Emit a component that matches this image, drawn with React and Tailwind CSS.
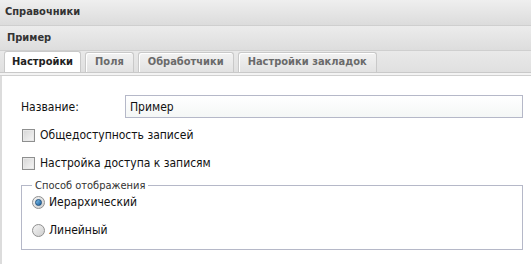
import React from 'react';

const font = { fontFamily: '"DejaVu Sans Condensed", "DejaVu Sans", sans-serif' };

function Tab({ label, active }) {
  if (active) {
    return (
      <div className="h-[21px] px-[7px] flex items-center rounded-t-[3px] border border-b-0 border-[#c9c9c9] bg-white text-[11px] font-bold text-[#222]">
        {label}
      </div>
    );
  }
  return (
    <div className="h-[20px] px-[9px] flex items-center rounded-t-[3px] border border-b-0 border-[#c9c9c9] bg-gradient-to-b from-[#f2f2f2] to-[#e2e2e2] shadow-[inset_1px_1px_0_#fff] text-[11px] font-bold text-[#6a6a6a]">
      {label}
    </div>
  );
}

function Checkbox({ label }) {
  return (
    <label className="flex items-center gap-[5px] h-[14px]">
      <span className="w-[13px] h-[13px] border border-[#8e8f8f] bg-gradient-to-br from-[#d6d6d6] to-[#f6f6f6] shadow-[inset_0_0_0_1px_#e8e8e8]" />
      <span>{label}</span>
    </label>
  );
}

function Radio({ label, checked }) {
  return (
    <label className="flex items-center gap-[4px] h-[14px]">
      <span className="w-[13px] h-[13px] rounded-full border border-[#8f8f8f] bg-gradient-to-br from-[#f4f4f4] to-[#cfcfcf] flex items-center justify-center">
        {checked && <span className="w-[7px] h-[7px] rounded-full bg-gradient-to-br from-[#7ec3ef] to-[#1b5f9c] border border-[#1d4f7d]" />}
      </span>
      <span>{label}</span>
    </label>
  );
}

export default function App() {
  return (
    <div className="w-[531px] h-[264px] bg-white overflow-hidden" style={font}>
      <div className="h-[26px] px-[5px] flex items-center border-b border-[#cfcfcf] bg-gradient-to-b from-[#efefef] to-[#dcdcdc] text-[11px] font-bold text-[#333]">
        Справочники
      </div>
      <div className="h-[25px] px-[7px] flex items-center border-b border-[#cfcfcf] bg-gradient-to-b from-[#ececec] to-[#dddddd] text-[11px] font-bold text-[#333]">
        Пример
      </div>
      <div className="h-[22px] pl-[4px] flex items-end gap-[4px] bg-gradient-to-b from-[#e9e9e9] to-[#e0e0e0] border-b border-[#c9c9c9]">
        <Tab label="Настройки" active />
        <Tab label="Поля" />
        <Tab label="Обработчики" />
        <Tab label="Настройки закладок" />
      </div>
      <div className="h-[3px] bg-[#f3f3f3] border-b border-[#d0d0d0]" />
      <div className="border-l-2 border-[#dcdcdc] h-full pl-[19px] pr-[8px] pt-[19px] text-[12px] text-[#111]">
        <div className="flex items-center h-[23px]">
          <span className="w-[104px]">Название:</span>
          <div className="flex-1 h-[23px] px-[4px] flex items-center border border-[#b5b8c8] bg-gradient-to-b from-[#ffffff] to-[#f4f7f6]">
            Пример
          </div>
        </div>
        <div className="pl-[1px] mt-[10px] flex flex-col gap-[14px]">
          <Checkbox label="Общедоступность записей" />
          <Checkbox label="Настройка доступа к записям" />
        </div>
        <fieldset className="mt-[9px] border border-[#b5b8c8] px-[10px] pb-[12px] pt-[3px]">
          <legend className="px-[3px] text-[11px] text-[#333] leading-[13px]">Способ отображения</legend>
          <div className="flex flex-col gap-[14px]">
            <Radio label="Иерархический" checked />
            <Radio label="Линейный" />
          </div>
        </fieldset>
      </div>
    </div>
  );
}
